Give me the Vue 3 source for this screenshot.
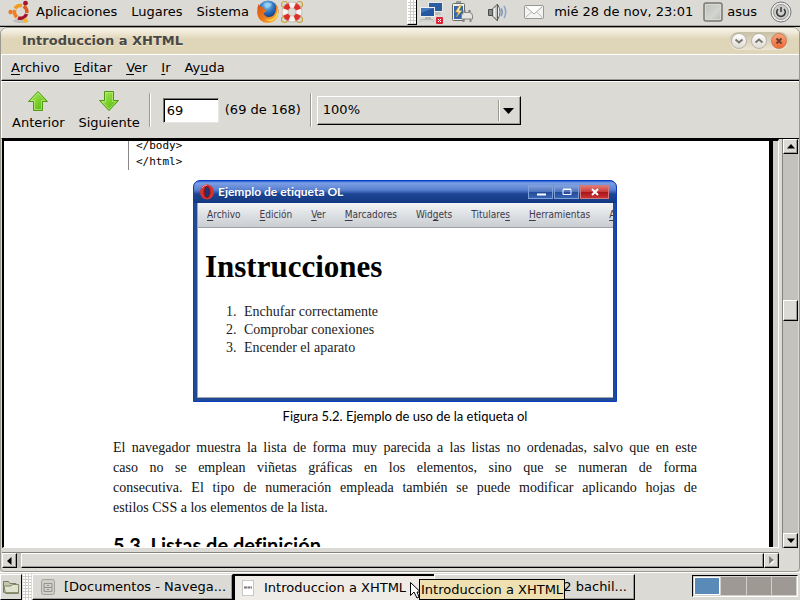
<script setup>
import { ref } from 'vue'

const panelMenus = ['Aplicaciones', 'Lugares', 'Sistema']
const menus = [
  ['', 'A', 'rchivo'],
  ['', 'E', 'ditar'],
  ['', 'V', 'er'],
  ['', 'I', 'r'],
  ['Ay', 'u', 'da'],
]
const figureMenus = [
  ['', 'A', 'rchivo'],
  ['', 'E', 'dición'],
  ['', 'V', 'er'],
  ['', 'M', 'arcadores'],
  ['Wid', 'g', 'ets'],
  ['Titulare', 's', ''],
  ['', 'H', 'erramientas'],
  ['', 'A', ''],
]
const steps = ['Enchufar correctamente', 'Comprobar conexiones', 'Encender el aparato']
const paragraph = [
  'El navegador muestra la lista de forma muy parecida a las listas no ordenadas, salvo que en este',
  'caso no se emplean viñetas gráficas en los elementos, sino que se numeran de forma',
  'consecutiva. El tipo de numeración empleada también se puede modificar aplicando hojas de',
  'estilos CSS a los elementos de la lista.',
]
const pageNumber = ref('69')
const zoom = ref('100%')
</script>

<template>
  <div class="desktop">
    <header class="panel">
      <nav class="panel-left">
        <svg class="ubuntu" width="22" height="24" viewBox="0 0 22 24">
          <ellipse cx="13" cy="21" rx="8" ry="2" fill="#000" opacity=".12" />
          <g fill="none" stroke-width="3.500">
            <path d="M7 8.500 A6.300 6.300 0 0 1 14 5.700" stroke="#f39a1e" />
            <path d="M15.500 6.300 A6.300 6.300 0 0 1 18.700 13" stroke="#e25a1c" />
            <path d="M18.500 14 A6.300 6.300 0 0 1 10 17.800" stroke="#a5122a" />
            <path d="M9 17 A6.300 6.300 0 0 1 6.800 10" stroke="#f0811c" />
          </g>
          <circle cx="2.6" cy="12" r="2.2" fill="#f0752a" />
          <circle cx="17.5" cy="3.2" r="2.4" fill="#a8152c" />
          <circle cx="17.5" cy="20.5" r="2.3" fill="#f6b62a" />
        </svg>
        <button v-for="m in panelMenus" :key="m" class="panel-menu">{{ m }}</button>
        <button class="launcher" aria-label="Firefox">
          <svg width="24" height="24" viewBox="0 0 24 24">
            <defs>
              <radialGradient id="globe" cx=".45" cy=".25" r=".7">
                <stop offset="0" stop-color="#8fd0f5" /><stop offset=".5" stop-color="#2a70c0" /><stop offset="1" stop-color="#0c2a6c" />
              </radialGradient>
              <linearGradient id="fox" x1="0" y1="0" x2="1" y2="1">
                <stop offset="0" stop-color="#d84a10" /><stop offset=".6" stop-color="#ee8420" /><stop offset="1" stop-color="#fbd24a" />
              </linearGradient>
            </defs>
            <circle cx="12" cy="10.500" r="10" fill="url(#globe)" />
            <path d="M8 4 Q12 1.5 16 4 L14 7 L10 8 Z" fill="#9bd6f2" opacity=".7" />
            <path d="M2.500 4 Q4 7 6 7 Q8 7 8 9 L11 10.500 Q10 12.500 7.500 13 Q9 17.500 13.500 17 Q19.500 16 20 9 Q20 5 18.500 3 Q23 7 22.700 12.500 Q21.500 23 12 23 Q2 22.500 1.200 13 Q1 8 2.500 4 Z" fill="url(#fox)" />
            <path d="M21 7 Q22 14 18 18 Q14 21 9 19 Q14 23 19 19 Q24 14 21 7Z" fill="#fbd65a" />
          </svg>
        </button>
        <button class="launcher" aria-label="Centro de ayuda">
          <svg width="24" height="24" viewBox="0 0 24 24">
            <g fill="none" stroke="#c9a33c" stroke-width="1.200">
              <circle cx="4.500" cy="4.500" r="3" /><circle cx="19.500" cy="4.500" r="3" /><circle cx="4.500" cy="19.500" r="3" /><circle cx="19.500" cy="19.500" r="3" />
            </g>
            <g transform="rotate(22 12 12)">
              <circle cx="12" cy="12" r="7" fill="none" stroke="#a99c92" stroke-width="6.500" />
              <circle cx="12" cy="12" r="7" fill="none" stroke="#f4f3f0" stroke-width="5.500" />
              <circle cx="12" cy="12" r="7" fill="none" stroke="#dc3026" stroke-width="5.500" stroke-dasharray="5.498 5.498" />
            </g>
          </svg>
        </button>
      </nav>
      <div class="panel-right">
        <span class="applet-handle"></span>
        <div class="tray">
          <div class="tray-pair">
            <svg width="26" height="24" viewBox="0 0 26 24">
              <rect x="9.500" y="2.500" width="14" height="9" fill="#2c5da0" stroke="#e9e9e6" />
              <path d="M15 12 h6 l1 3 h-9z" fill="#bfc1bd" />
              <rect x="1.500" y="7.500" width="14" height="9" fill="#2357a0" stroke="#eef0ee" />
              <path d="M2 8 h13 L2 13z" fill="#5d8cc8" opacity=".6" />
              <path d="M6 17 h6 v2 h2 l1 3 H1 l1-3 h4z" fill="#b4b6b2" />
              <path d="M2 21 h12" stroke="#f5f5f2" />
              <rect x="17" y="17" width="7" height="7" rx="1" fill="#dc2434" />
              <path d="M19 19 l3 3 M22 19 l-3 3" stroke="#fff" />
            </svg>
            <svg width="22" height="24" viewBox="0 0 22 24">
              <rect x="5" y="1" width="5" height="3" fill="#9a9c98" />
              <rect x="1.500" y="3.500" width="12" height="17" rx="1" fill="#f2f2ec" stroke="#676b6e" />
              <rect x="3" y="6" width="9" height="13" fill="#3566ae" />
              <path d="M8.500 5.500 L4.500 12 h3 L5.500 17 L11 10.500 h-3 L10.500 5.500z" fill="#fff4b0" stroke="#c99b1d" stroke-width=".7" />
              <path d="M13.500 13 v-3 M18.500 13 v-3" stroke="#777" stroke-width="2" />
              <path d="M10.500 19 v-3 q0-3.500 3-3.500 h5 q3 0 3 3.500 v3z" fill="#e5e6e3" stroke="#858783" />
              <path d="M12.500 19 v3 M19.500 19 v3" stroke="#858783" stroke-width="2" />
            </svg>
          </div>
          <svg width="22" height="22" viewBox="0 0 22 22">
            <path d="M1.500 8.500 h4 v6 h-4z" fill="#888b88" stroke="#4a4c4a" />
            <path d="M5.500 8 L10.500 3 v17 L5.500 15z" fill="#c3c5c2" stroke="#555856" />
            <path d="M7.500 7 v9" stroke="#f3f3f1" stroke-width="1.500" />
            <path d="M11 4 q4 7 0 14" fill="#eee" stroke="#656865" />
            <path d="M14 7.500 q2.500 3.800 0 7.500" fill="none" stroke="#6f94c2" stroke-width="1.500" />
            <path d="M17 5 q3.500 6 0 12" fill="none" stroke="#8aa6cc" stroke-width="1.500" />
          </svg>
          <svg width="22" height="16" viewBox="0 0 22 16">
            <rect x="1.500" y="1.500" width="19" height="13" rx="1" fill="#f4f4f2" stroke="#969894" />
            <path d="M2.500 2.500 L11 10 L19.500 2.500" fill="#fff" stroke="#a3a5a1" />
            <path d="M2.500 13.500 L8.500 8 M19.500 13.500 L13.500 8" stroke="#b7b9b5" />
          </svg>
        </div>
        <time class="clock">mié 28 de nov, 23:01</time>
        <button class="user">
          <svg width="20" height="20" viewBox="0 0 20 20">
            <defs><linearGradient id="face" x1="0" y1="0" x2="1" y2="1"><stop offset="0" stop-color="#bdbfba" /><stop offset=".6" stop-color="#d2d4cf" /><stop offset="1" stop-color="#b5b7b2" /></linearGradient></defs>
            <rect x="1" y="1" width="18" height="18" rx="2" fill="url(#face)" stroke="#777976" stroke-width="1.500" />
            <rect x="2.500" y="2.500" width="15" height="15" fill="none" stroke="#d8d9d5" />
          </svg>
          asus
        </button>
        <button class="power" aria-label="Apagar">
          <svg width="22" height="22" viewBox="0 0 22 22">
            <circle cx="11" cy="11" r="10" fill="#ececea" stroke="#777" />
            <circle cx="11" cy="11" r="7.500" fill="#cbccc9" stroke="#979995" />
            <path d="M8 8 a4.300 4.300 0 1 0 6 0" fill="none" stroke="#353735" stroke-width="1.500" />
            <path d="M11 6 v5" stroke="#353735" stroke-width="1.500" />
          </svg>
        </button>
      </div>
    </header>

    <main class="window">
      <div class="titlebar">
        <h1>Introduccion a XHTML</h1>
        <div class="window-buttons">
          <button aria-label="Minimizar"><svg width="16" height="16" viewBox="0 0 16 16"><path d="M4.500 6.500 L8 9.500 L11.500 6.500" /></svg></button>
          <button aria-label="Maximizar"><svg width="16" height="16" viewBox="0 0 16 16"><path d="M4.500 9.500 L8 6.500 L11.500 9.500" /></svg></button>
          <button class="close" aria-label="Cerrar"><svg width="16" height="16" viewBox="0 0 16 16"><path d="M5.500 5.500 L10.500 10.500 M10.500 5.500 L5.500 10.500" /></svg></button>
        </div>
      </div>

      <nav class="menubar">
        <button v-for="m in menus" :key="m.join('')">{{ m[0] }}<u>{{ m[1] }}</u>{{ m[2] }}</button>
      </nav>

      <div class="toolbar">
        <button class="tool">
          <svg width="22" height="22" viewBox="0 0 22 22">
            <defs><linearGradient id="leaf" x1="0" y1="0" x2="1" y2="1"><stop offset="0" stop-color="#b5ea6a" /><stop offset=".6" stop-color="#73cc22" /><stop offset="1" stop-color="#55ab12" /></linearGradient></defs>
            <path d="M11 1.500 L20.500 11.500 H15.500 V20.500 H6.500 V11.500 H1.500 Z" fill="url(#leaf)" stroke="#4d9a12" stroke-linejoin="round" />
            <path d="M11 3 L18 10.500 H14.500 V19.500 H7.500 V10.500 H4 Z" fill="none" stroke="#c8f38c" opacity=".6" />
          </svg>
          <span>Anterior</span>
        </button>
        <button class="tool">
          <svg width="22" height="22" viewBox="0 0 22 22">
            <path d="M11 20.500 L20.500 10.500 H15.500 V1.500 H6.500 V10.500 H1.500 Z" fill="url(#leaf)" stroke="#4d9a12" stroke-linejoin="round" />
            <path d="M11 19 L18 11.500 H14.500 V2.500 H7.500 V11.500 H4 Z" fill="none" stroke="#c8f38c" opacity=".6" />
          </svg>
          <span>Siguiente</span>
        </button>
        <span class="separator"></span>
        <label class="page-field">
          <input v-model="pageNumber" type="text" aria-label="Página" />
          <span>(69 de 168)</span>
        </label>
        <span class="separator"></span>
        <div class="combo">
          <select v-model="zoom" aria-label="Ampliación"><option>100%</option></select>
          <svg width="16" height="21" viewBox="0 0 16 21">
            <path d="M.5 0 v21" stroke="#9c9a94" /><path d="M1.500 0 v21" stroke="#fff" />
            <path d="M5 8 h11 l-5.500 6z" fill="#000" />
          </svg>
        </div>
      </div>

      <div class="viewer">
        <div class="document">
          <article class="page">
            <pre class="code">&lt;/body&gt;
&lt;/html&gt;</pre>
            <figure>
              <div class="browser">
                <div class="browser-title">
                  <svg width="14" height="16" viewBox="0 0 14 16">
                    <ellipse cx="7" cy="8" rx="7" ry="7.500" fill="#d8322e" />
                    <ellipse cx="7" cy="8" rx="3.500" ry="6" fill="#8c1218" />
                    <ellipse cx="7" cy="8" rx="2" ry="5" fill="#1b3576" />
                    <path d="M2 4 Q4 1 7 1" fill="none" stroke="#ff8d80" />
                  </svg>
                  <strong>Ejemplo de etiqueta OL</strong>
                  <div class="browser-buttons">
                    <button aria-label="Minimizar"><svg width="12" height="10" viewBox="0 0 12 10"><path d="M2 7.500 h9" stroke="#fff" stroke-width="2" /></svg></button>
                    <button aria-label="Maximizar"><svg width="12" height="10" viewBox="0 0 12 10"><path d="M2 2.500 h8 v5 h-8z M2 2 h8" stroke="#fff" fill="none" /></svg></button>
                    <button class="red" aria-label="Cerrar"><svg width="12" height="10" viewBox="0 0 12 10"><path d="M3 2 l6 6 M9 2 l-6 6" stroke="#fff" stroke-width="2" /></svg></button>
                  </div>
                </div>
                <div class="browser-menu">
                  <button v-for="(m, i) in figureMenus" :key="i">{{ m[0] }}<u>{{ m[1] }}</u>{{ m[2] }}</button>
                </div>
                <div class="browser-body">
                  <h2>Instrucciones</h2>
                  <ol><li v-for="s in steps" :key="s">{{ s }}</li></ol>
                </div>
              </div>
              <figcaption>Figura 5.2. Ejemplo de uso de la etiqueta ol</figcaption>
            </figure>
            <p class="text"><span v-for="line in paragraph" :key="line">{{ line }}</span></p>
            <h2 class="section">5.3. Listas de definición</h2>
          </article>
        </div>
        <div class="vscroll">
          <button class="arrow" aria-label="Subir"><svg width="8" height="5" viewBox="0 0 8 5"><path d="M4 0 L8 4.500 H0z" fill="#000" /></svg></button>
          <div class="vtrack"><span class="before"></span><span class="vthumb"></span><span class="after"></span></div>
          <button class="arrow" aria-label="Bajar"><svg width="8" height="5" viewBox="0 0 8 5"><path d="M4 5 L8 .5 H0z" fill="#000" /></svg></button>
        </div>
        <div class="hscroll">
          <button class="arrow" aria-label="Izquierda"><svg width="5" height="8" viewBox="0 0 5 8"><path d="M0 4 L4.500 0 V8z" fill="#000" /></svg></button>
          <span class="hthumb"></span>
          <button class="arrow" aria-label="Derecha"><svg width="6" height="9" viewBox="0 0 6 9"><path d="M1.500 1 L6 5 L1.500 9z" fill="#fff" /><path d="M0 0 L5 4 L0 8z" fill="#85837e" /></svg></button>
        </div>
      </div>
    </main>

    <footer class="taskbar">
      <button class="show" aria-label="Carpetas">
        <svg width="18" height="18" viewBox="0 0 18 18">
          <path d="M1.500 14.500 v-11 h5 l1.500 2 h6 v3" fill="#c4c9b0" stroke="#767e62" />
          <path d="M3.500 15.500 L2 8 h7 l1.500-1.500 h6 v9z" fill="#e0e4cf" stroke="#7e8768" />
          <path d="M1.500 14.500 h15" stroke="#8a9272" />
        </svg>
      </button>
      <span class="grip"></span>
      <div class="tasks">
        <button class="task">
          <svg width="16" height="18" viewBox="0 0 16 18">
            <rect x="1.500" y="1.500" width="13" height="15" rx="2" fill="#cfcfca" stroke="#a2a29d" />
            <path d="M4 5.500 h8 v8 h-8z M4 9.500 h8 M7 7.500 h2 M7 11.500 h2" fill="none" stroke="#94948f" />
          </svg>
          <span>[Documentos - Navega...</span>
        </button>
        <div class="task-slot">
          <button class="task active">
            <svg width="16" height="18" viewBox="0 0 16 18">
              <rect x="2.500" y="1.500" width="11" height="15" fill="#fff" stroke="#c8c8c4" />
              <path d="M4 8.500 h8" stroke="#777" stroke-width="2" stroke-dasharray="3 .5" />
            </svg>
            <span>Introduccion a XHTML</span>
          </button>
          <svg class="cursor" width="12" height="20" viewBox="0 0 12 20"><path d="M.5 .5 V13.500 L4 10 L7 16 L9 15 L7 10 H10.500 Z" fill="#fff" stroke="#000" /></svg>
          <div class="tooltip" role="tooltip">Introduccion a XHTML</div>
        </div>
        <button class="task last"><span>2 bachil...</span></button>
      </div>
      <div class="pager">
        <button class="current" aria-label="Área 1"></button>
        <button aria-label="Área 2"></button>
        <button aria-label="Área 3"></button>
        <button aria-label="Área 4"></button>
      </div>
    </footer>
  </div>
</template>

<style>
html, body { margin: 0; overflow: hidden; }
</style>

<style scoped>
* { box-sizing: border-box; }
.desktop {
  display: flex; flex-direction: column; height: 100vh;
  background: #dcdad5; color: #000;
  font: 13px/16px "DejaVu Sans", sans-serif;
}
button, input, select { font: inherit; color: inherit; border: 0; padding: 0; margin: 0; background: none; white-space: nowrap; }
svg { display: block; flex: none; }

.panel { display: flex; justify-content: space-between; height: 27px; border-bottom: 1px solid #000; box-shadow: inset 0 -1px #aaa8a3; flex: none; }
.panel-left, .panel-right, .tray, .tray-pair, .user { display: flex; align-items: center; }
.panel-left { padding: 0 0 2px 8px; }
.ubuntu { margin-right: -1px; }
.panel-menu { padding: 0 7px; }
.launcher { width: 24px; }
.panel-right { padding: 0 8px 2px 0; }
.applet-handle, .grip {
  background: radial-gradient(circle at 1px 1px, #fff 1px, transparent 1px) 0 0 / 3px 3px, #cfcdc8;
}
.applet-handle { width: 10px; height: 25px; border-left: 1px solid #fff; border-right: 1px solid #000; border-bottom: 1px solid #000; }
.tray { gap: 14px; padding: 0 0 1px 2px; }
.tray-pair { gap: 6px; }
.clock { margin: 0 10px 0 9px; }
.user { gap: 4px; }
.power { margin-left: 13px; }

.window {
  display: flex; flex-direction: column; flex: 1; min-height: 0;
  border: 1px solid #9c9a90;
  border-radius: 7px 7px 4px 4px; overflow: hidden;
}
.titlebar {
  display: flex; align-items: center; justify-content: space-between; height: 27px; flex: none;
  padding: 0 10px 0 21px; border-bottom: 1px solid #fff;
  background: linear-gradient(#f8f4ea, #eee7d4 5px, #dfd5b8 11px, #dfd5b8);
}
.titlebar h1 { margin: 0; font-size: 13px; line-height: 16px; color: #484846; text-shadow: 0 1px #f2ead2; }
.window-buttons { display: flex; gap: 4px; padding: 1px 2px; border-radius: 9px; background: linear-gradient(#c9c0a8, #ece5d3); }
.window-buttons button { width: 16px; height: 16px; border-radius: 8px; background: linear-gradient(#fff, #dedbd2); border: 1px solid #b9b4a6; }
.window-buttons svg { margin: -1px; fill: none; stroke: #77756e; stroke-width: 2; }
.window-buttons .close { background: linear-gradient(#f9a27c, #ee6a35); border-color: #cf7a58; }
.window-buttons .close svg { stroke: #6c3f30; }

.menubar { display: flex; height: 26px; padding: 0 2px; flex: none; border-bottom: 1px solid #000; box-shadow: inset 0 -1px #9c9a94; border-left: 1px solid #fff; }
.menubar button { padding: 0 7px; }
u { text-underline-offset: 2px; }

.toolbar { display: flex; align-items: center; flex: none; height: 58px; padding: 0 3px; border: solid; border-width: 1px 0 1px 1px; border-color: #fff #000 #000 #fff; }
.tool { display: flex; flex-direction: column; align-items: center; gap: 3px; padding: 0 7px; }
.separator { width: 2px; height: 34px; border-left: 1px solid #9c9a94; border-right: 1px solid #fff; margin: 0 5px 0 3px; }
.tool + .separator { margin: 0 12px 0 2px; }
.page-field { display: flex; align-items: center; gap: 6px; margin-right: 6px; }
.page-field input { width: 56px; height: 25px; padding: 0 3px; background: #fff; border: 1px solid #e8e6e2; border-top: 1px solid #777; border-left: 1px solid #777; box-shadow: inset 1px 1px #000; outline: 0; }
.combo { display: grid; width: 204px; height: 29px; align-items: center; border: solid; border-width: 1px; border-color: #fff #000 #000 #fff; box-shadow: inset -1px -1px #9c9a94; }
.combo select, .combo svg { grid-area: 1 / 1; }
.combo select { appearance: none; width: 100%; height: 100%; padding-left: 5px; outline: 0; }
.combo svg { justify-self: end; margin-right: 6px; pointer-events: none; }

.viewer { display: grid; grid-template-columns: minmax(0, 1fr) 16px; grid-template-rows: minmax(0, 1fr) 16px; gap: 4px 3px; flex: 1; min-height: 0; padding: 0 1px 3px 1px; }
.document {
  overflow: hidden; padding-right: 5px; background: #d0cec9;
  border: solid; border-width: 2px 1px 1px 2px; border-color: #000 #fff #fff #000;
}
.page { height: 100%; padding: 0 72px 0 109px; background: #fff; border-right: 4px solid #000; overflow: hidden; font-variant-ligatures: none; }
.code { margin: -3px 0 0 15px; padding-left: 7px; border-left: 1px solid #888; font-family: "DejaVu Sans Mono", monospace; font-size: 11px; line-height: 16px; }
figure { display: flex; flex-direction: column; align-items: center; margin: 10px 0 0; }
figcaption { margin-top: 4px; font-family: Lato, sans-serif; font-size: 13px; line-height: 20px; }
.browser {
  width: 424px; max-width: 100%; padding: 0 3px 3px; background: #204a96;
  border: 1px solid #0a3cc4; border-radius: 7px 7px 0 0; overflow: hidden;
}
.browser-title {
  display: flex; align-items: center; gap: 4px; height: 22px; margin: 0 -3px; padding: 0 7px 0 6px;
  background: linear-gradient(#2b5fd8, #7b9fe4 2px, #5880d0 9px, #1d4594 13px, #123880);
  color: #fff;
}
.browser-title strong { font-family: Lato, sans-serif; font-size: 12px; text-shadow: 0 1px 1px #123880; }
.browser-buttons { display: flex; gap: 1px; margin-left: auto; }
.browser-buttons button { display: grid; place-items: center; width: 25px; height: 14px; border: 1px solid #7f9fdb; background: linear-gradient(#7f9edc, #4b71bb 50%, #224c9a 50%, #3863b2); }
.browser-buttons .red { width: 29px; border-color: #d5797b; background: linear-gradient(#df7773, #c93938 50%, #a71519 50%, #c83432); }
.browser-menu { display: flex; gap: 19px; height: 25px; padding: 0 0 0 9px; overflow: hidden; border-left: 1px solid #9da5ad; border-bottom: 1px solid #9da2a8; background: linear-gradient(#f3f4f6, #dfe2e5 45%, #c9cdd1); font-family: "DejaVu Sans Condensed", "DejaVu Sans", sans-serif; font-size: 10px; color: #3d3a4a; }
.browser-menu button { flex: none; font-variant-ligatures: none; }
.browser-body { height: 170px; padding: 20px 7px 0; background: #fff; border: solid #9da5ad; border-width: 0 0 1px 1px; font-family: "Liberation Serif", serif; }
.browser-body h2 { margin: 0; font-size: 31px; line-height: 38px; }
.browser-body ol { margin: 17px 0 0; padding: 0 0 0 35px; font-size: 14px; line-height: 18px; color: #1c1c1c; }
.browser-body li { padding-left: 4px; }
.text { margin: 12px 0 0; font-family: "Liberation Serif", serif; font-size: 14px; line-height: 20px; color: #111; }
.text span { display: block; text-align-last: justify; white-space: nowrap; }
.text span:last-child { text-align-last: left; }
.section { margin: 15px 0 0; font-family: Lato, sans-serif; font-size: 20px; line-height: 24px; }

.arrow { display: grid; place-items: center; flex: none; width: 15px; height: 15px; background: #dcdad5; border: solid; border-width: 1px; border-color: #fff #000 #000 #fff; box-shadow: inset -1px -1px #9c9a94; }
.vscroll { display: flex; flex-direction: column; border-left: 1px solid #85837e; background: #c3c2bd; }
.vtrack { display: flex; flex-direction: column; flex: 1; }
.before { flex: 147; }
.after { flex: 213; }
.vthumb { height: 21px; }
.vthumb, .hthumb { background: #dcdad5; border: solid; border-width: 1px; border-color: #fff #000 #000 #fff; box-shadow: inset -1px -1px #9c9a94; }
.hscroll { display: flex; border-top: 1px solid #85837e; background: #c3c2bd; }
.hthumb { flex: 1; margin-left: 4px; }

.taskbar { display: flex; align-items: stretch; height: 28px; flex: none; padding-right: 2px; border-top: 1px solid #fff; }
.show { display: grid; place-items: center; width: 22px; margin-top: 1px; border: solid; border-width: 1px; border-color: #fff #000 #000 #fff; }
.grip { width: 8px; margin: 1px 1px 0; }
.tasks { display: grid; grid-template-columns: repeat(3, minmax(0, 1fr)); flex: 1; max-width: 603px; margin-top: 1px; }
.task-slot { position: relative; }
.task { display: flex; align-items: center; gap: 8px; padding: 0 7px; overflow: hidden; border: solid; border-width: 1px; border-color: #fff #000 #000 #fff; box-shadow: inset -1px -1px #9c9a94; }
.task-slot .task { width: 100%; height: 100%; }
.task.active { background: #efebe7; border-width: 2px 0 0 2px; border-color: #000; box-shadow: none; padding-left: 5px; }
.task.last { justify-content: flex-end; }
.cursor { position: absolute; left: 177px; top: 8px; z-index: 1; }
.tooltip { position: absolute; left: 186px; top: 5px; z-index: 2; padding: 1px; border: 1px solid #000; background: #eee0b0; line-height: 17px; white-space: nowrap; }
.pager { display: flex; gap: 1px; margin: 2px 0 3px auto; width: 106px; padding: 1px; background: #d2d0cb; border: 1px solid #000; border-right-color: #fff; border-bottom-color: #fff; }
.pager button { flex: 1; background: #9e9992; }
.pager .current { background: #5a8ab8; border: 1px solid #fff; }
</style>
